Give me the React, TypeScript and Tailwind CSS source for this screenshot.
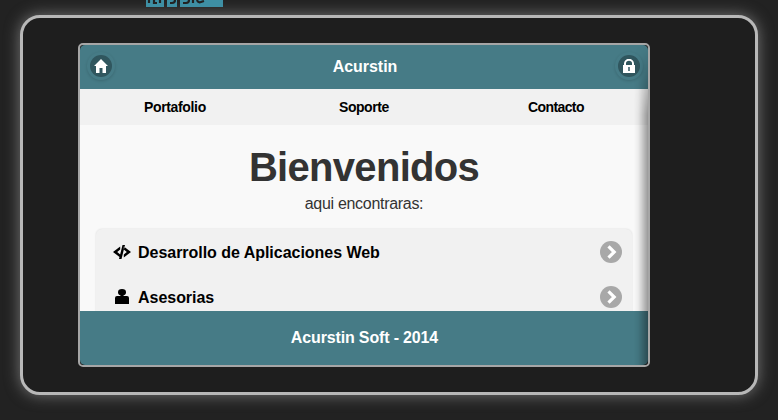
import React from "react";

function RoundIcon({ children }: { children: React.ReactNode }) {
  return (
    <button className="mb-[2px] flex size-7 items-center justify-center rounded-full shadow-[0_1px_3px_rgba(0,0,0,0.15)]">
      <span className="flex size-[22px] items-center justify-center rounded-full bg-[#30565e]">{children}</span>
    </button>
  );
}

function Row({ icon, children }: { icon: React.ReactNode; children: React.ReactNode }) {
  return (
    <li className="flex h-[45px] items-center pl-[17px] pr-[10px] text-[16px] font-bold text-black">
      <span className="mr-[7px] flex w-[18px] justify-center">{icon}</span>
      <span className="pt-[2px] tracking-[-0.03px]">{children}</span>
      <svg className="ml-auto" width="22" height="22" viewBox="0 0 22 22">
        <circle cx="11" cy="11" r="11" fill="#a8a8a8" />
        <path d="M8.5 5.3 14.2 11 8.5 16.7" fill="none" stroke="#fff" strokeWidth="3.2" />
      </svg>
    </li>
  );
}

export default function App() {
  return (
    <div className="relative h-[420px] w-[778px] overflow-hidden bg-[#222] px-5 pt-[15px] font-['Liberation_Sans',Arial,sans-serif]">
      {/* Lower edge of the highlighted logo, scrolled past the top */}
      <svg className="absolute left-[146px] top-0" width="77" height="7" viewBox="0 0 77 7">
        <path d="M0 0H18V7H0ZM21 0H31V7H21ZM34 0H77V7H34Z" fill="#3e8fa4" />
        <path d="M3 0v3M8 0v3h3M14 0v3M24 3h2q3 0 3-3M37 3h3q3 0 3-3M47 0v3M51 0q1 3 4 2l3-1" fill="none" stroke="#222" strokeWidth="2.2" />
      </svg>
      <div className="h-[380px] w-[738px] rounded-[20px] border-[3px] border-[#b8b8b8] bg-[#1e1e1e] pl-[55px] pt-[25px] shadow-[0_0_15px_#777]">
        <div className="relative flex h-[324px] w-[572px] flex-col overflow-hidden rounded-[5px] border-2 border-[#a6a6a6] bg-[#1e1e1e]">
          <header className="flex h-11 shrink-0 items-center justify-between rounded-t-[5px] bg-[#467b86] pl-[7px] pr-[5px] text-[16px] font-bold text-white">
            <RoundIcon>
              <svg width="14" height="14" viewBox="0 0 14 14" fill="#fff"><path d="M7 0 0 7h2v7h3.5V9h3v5H12V7h2Z" /></svg>
            </RoundIcon>
            <h1 className="tracking-[-0.05px]">Acurstin</h1>
            <RoundIcon>
              <svg width="14" height="14" viewBox="0 0 14 14"><path d="M3 7V4.5a4 3.7 0 0 1 8 0V7" fill="none" stroke="#fff" strokeWidth="2" /><path d="M1 6h12v8H1Z" fill="#fff" /><path d="M6 8h2v4H6Z" fill="#648089" /></svg>
            </RoundIcon>
          </header>
          <nav className="flex h-9 shrink-0 items-center justify-between bg-[#f1f1f1] pl-16 pr-[64px] text-[14px] font-bold tracking-[-0.35px] text-black">
            <a className="w-[62px] whitespace-nowrap">Portafolio</a>
            <a className="mr-[6px] w-[50px] whitespace-nowrap tracking-[-0.45px]">Soporte</a>
            <a className="w-[56px] whitespace-nowrap tracking-[-0.6px]">Contacto</a>
          </nav>
          <main className="flex min-h-0 flex-1 flex-col items-center overflow-hidden bg-[#f9f9f9] text-[#333]">
            <h2 className="mt-[19px] text-[40px] font-bold leading-[46px] tracking-[-0.7px]">Bienvenidos</h2>
            <p className="mt-[4px] text-[16px] leading-5 tracking-[-0.3px]">aqui encontraras:</p>
            <ul className="mt-[15px] w-[536px] shrink-0 rounded-[6px] bg-[#f1f1f1] shadow-[0_0_2px_rgba(0,0,0,0.14)]">
              <Row icon={<svg width="18" height="14" viewBox="0 0 18 14"><path d="M7.2 1.5v3L4.2 7l3 2.5v3L0 7ZM10.8 1.5v3l3 2.5-3 2.5v3L18 7ZM9.5 0H12L8.5 14H6Z" /></svg>}>Desarrollo de Aplicaciones Web</Row>
              <Row icon={<svg width="14" height="15" viewBox="0 0 14 15" className="-mt-px"><ellipse cx="7" cy="3.3" rx="4" ry="3.3" /><path d="M5.5 5h3v3h-3ZM2 7h10q2 0 2 2v6H0V9q0-2 2-2Z" /></svg>}>Asesorias</Row>
            </ul>
          </main>
          <footer className="flex h-[54px] shrink-0 items-center justify-center rounded-b-[5px] bg-[#467b86] pl-px text-[16px] font-bold tracking-[-0.15px] text-white">Acurstin Soft - 2014</footer>
          <div className="pointer-events-none absolute inset-y-0 right-0 w-[14px] bg-[linear-gradient(to_right,transparent,rgba(0,0,0,0.05)_30%,rgba(0,0,0,0.38))] [mask-image:linear-gradient(to_bottom,transparent,black_70px)]" />
        </div>
      </div>
    </div>
  );
}
